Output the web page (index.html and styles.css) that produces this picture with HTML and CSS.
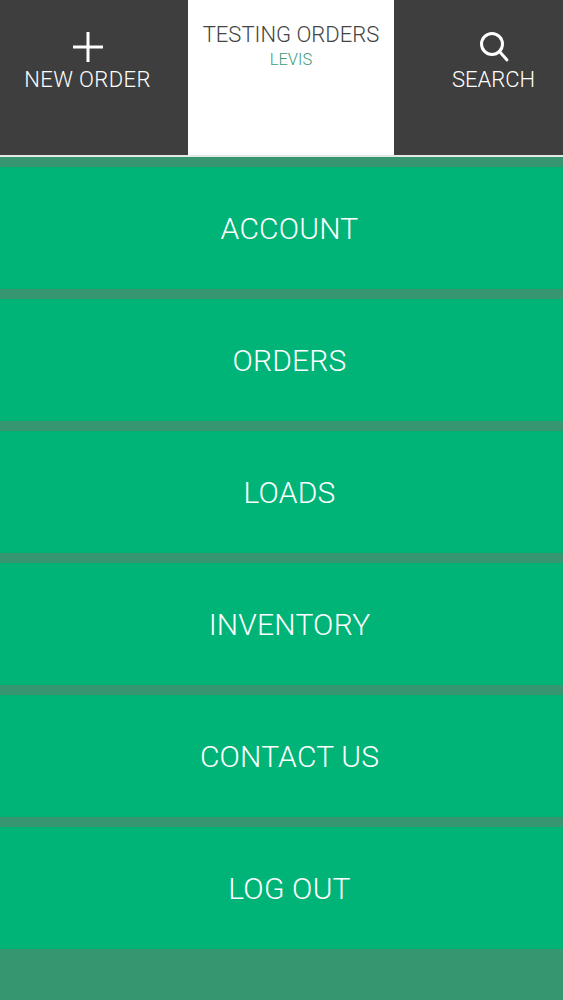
FILE: index.html
```html
<html>
<head>
	<meta http-equiv="Content-Type" content="text/html; charset=UTF-8">
	<link rel="stylesheet" href="styles.css">
</head>
<body>
	<div class="header">
		<div class="header_btn header_btn_left">
			<svg class="header_icon" width="34" height="32" viewBox="0 0 34 32">
				<path d="M17 1V31M2 16H32" fill="none" stroke="#fff" stroke-width="3"/>
			</svg>
			<span>NEW ORDER</span>
		</div>
		<div class="header_title">
			<div class="title_name">TESTING ORDERS</div>
			<div class="title_sub">LEVIS</div>
		</div>
		<div class="header_btn header_btn_right">
			<svg class="header_icon" width="34" height="32" viewBox="0 0 34 32">
				<circle cx="15" cy="13" r="10.5" fill="none" stroke="#fff" stroke-width="3"/>
				<path d="M22.5 20.5L30 29" fill="none" stroke="#fff" stroke-width="3" stroke-linecap="round"/>
			</svg>
			<span>SEARCH</span>
		</div>
	</div>
	<div class="menu">
		<div class="menu_item">ACCOUNT</div>
		<div class="menu_item">ORDERS</div>
		<div class="menu_item">LOADS</div>
		<div class="menu_item">INVENTORY</div>
		<div class="menu_item">CONTACT US</div>
		<div class="menu_item">LOG OUT</div>
	</div>
</body>
</html>
```
FILE: styles.css
```css
html, body
{
	height: 100%;
}
body
{
	margin: 0;
	overflow: hidden;
	background-color: #36966f;
	font-family: "Roboto", "Liberation Sans", sans-serif;
	font-weight: 300;
}
.header
{
	display: grid;
	grid-template-columns: 188px 206px 1fr;
	height: 155px;
	border-bottom: 2px solid #e4e8e6;
	background-color: #3e3e3e;
}
.header_btn
{
	display: flex;
	flex-direction: column;
	align-items: center;
	padding-top: 31px;
	color: #fff;
	font-size: 22px;
	line-height: 30px;
}
.header_btn_left
{
	padding-right: 13px;
	letter-spacing: 0.4px;
}
.header_btn_right
{
	padding-left: 30px;
}
.header_icon
{
	display: block;
	margin-bottom: 2px;
}
.header_title
{
	padding-top: 20px;
	background-color: #fff;
	text-align: center;
}
.title_name
{
	color: #444;
	font-size: 22px;
	line-height: 29px;
}
.title_sub
{
	color: #3f9c7b;
	font-size: 16.5px;
	line-height: 22px;
}
.menu
{
	display: flex;
	flex-direction: column;
	gap: 10px;
	padding-top: 10px;
}
.menu_item
{
	display: flex;
	align-items: center;
	justify-content: center;
	height: 120px;
	padding: 1px 0 1px 16px;
	background-color: #00b478;
	color: #fff;
	font-size: 30px;
	letter-spacing: 0.2px;
}
```
